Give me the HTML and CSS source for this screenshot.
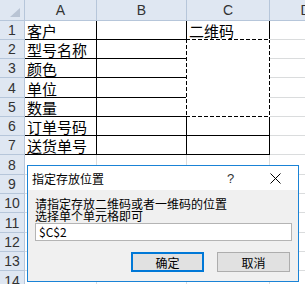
FILE: index.html
```html
<!DOCTYPE html>
<html lang="zh-CN">
<head>
    <meta charset="UTF-8">
    <meta name="viewport" content="width=device-width, initial-scale=1.0">
    <title>指定存放位置</title>
    <link rel="stylesheet" href="styles.css">
</head>
<body>
    <div class="sheet">
        <!-- header row -->
        <div class="hdr corner"><span class="tri"></span></div>
        <div class="hdr col">A</div>
        <div class="hdr col">B</div>
        <div class="hdr col">C</div>
        <div class="hdr col">D</div>

        <div class="hdr num">1</div>
        <div class="cell t">客户</div>
        <div class="cell t"></div>
        <div class="cell t nb">二维码</div>
        <div class="cell"></div>

        <div class="hdr num">2</div>
        <div class="cell t">型号名称</div>
        <div class="cell t nr"></div>
        <div class="cell merged"></div>
        <div class="cell"></div>

        <div class="hdr num">3</div>
        <div class="cell t">颜色</div>
        <div class="cell t nr"></div>
        <div class="cell"></div>

        <div class="hdr num">4</div>
        <div class="cell t">单位</div>
        <div class="cell t nr"></div>
        <div class="cell"></div>

        <div class="hdr num">5</div>
        <div class="cell t">数量</div>
        <div class="cell t nr"></div>
        <div class="cell"></div>

        <div class="hdr num">6</div>
        <div class="cell t">订单号码</div>
        <div class="cell t"></div>
        <div class="cell t"></div>
        <div class="cell"></div>

        <div class="hdr num">7</div>
        <div class="cell t">送货单号</div>
        <div class="cell t"></div>
        <div class="cell t"></div>
        <div class="cell"></div>

        <div class="hdr num">8</div>
        <div class="cell"></div><div class="cell"></div><div class="cell"></div><div class="cell"></div>
        <div class="hdr num">9</div>
        <div class="cell"></div><div class="cell"></div><div class="cell"></div><div class="cell"></div>
        <div class="hdr num">10</div>
        <div class="cell"></div><div class="cell"></div><div class="cell"></div><div class="cell"></div>
        <div class="hdr num">11</div>
        <div class="cell"></div><div class="cell"></div><div class="cell"></div><div class="cell"></div>
        <div class="hdr num">12</div>
        <div class="cell"></div><div class="cell"></div><div class="cell"></div><div class="cell"></div>
        <div class="hdr num">13</div>
        <div class="cell"></div><div class="cell"></div><div class="cell"></div><div class="cell"></div>
        <div class="hdr num">14</div>
        <div class="cell"></div><div class="cell"></div><div class="cell"></div><div class="cell"></div>
    </div>

    <!-- 对话框 -->
    <div class="dialog">
        <div class="titlebar">
            <span class="title">指定存放位置</span>
            <span class="tbtn help">?</span>
            <span class="tbtn close">
                <svg width="11" height="11" viewBox="0 0 11 11">
                    <path d="M0.5 0.5 L10.5 10.5 M10.5 0.5 L0.5 10.5" stroke="#000" stroke-width="1"/>
                </svg>
            </span>
        </div>
        <div class="dlg-body">
            <p class="prompt">请指定存放二维码或者一维码的位置<br>选择单个单元格即可</p>
            <div class="ref-input">$C$2</div>
            <div class="buttons">
                <button class="btn default">确定</button>
                <button class="btn">取消</button>
            </div>
        </div>
    </div>
</body>
</html>
```

FILE: styles.css
```css
body {
    margin: 0;
    background: #fff;
    overflow: hidden;
    font-family: "Noto Sans CJK SC", sans-serif;
}

.sheet {
    display: grid;
    grid-template-columns: 25px 72px 90px 83px 72px;
    grid-template-rows: 21px 19px 19px 19px 20px 19px 19px 19px 20px 19px 19px 20px 19px 19px 20px;
}

.hdr {
    box-sizing: border-box;
    background: #dfe7f2;
    border-right: 1px solid #b6c6da;
    border-bottom: 1px solid #b6c6da;
    color: #333;
    font-family: "Liberation Sans", Arial, sans-serif;
    font-size: 14px;
    display: flex;
    align-items: center;
    justify-content: center;
}

.corner {
    position: relative;
}

.tri {
    position: absolute;
    right: 4px;
    bottom: 3px;
    width: 0;
    height: 0;
    border-left: 10px solid transparent;
    border-bottom: 9px solid #b9c4d4;
}

.cell {
    box-sizing: border-box;
    border-right: 1px solid #dadcdd;
    border-bottom: 1px solid #dadcdd;
    font-size: 15px;
    line-height: 16px;
    color: #000;
    padding-left: 2px;
    display: flex;
    align-items: flex-end;
    white-space: nowrap;
}

/* 表格黑色边框 */
.cell.t {
    border-right-color: #000;
    border-bottom-color: #000;
}

.cell.nb {
    border-bottom-color: #fff;
}

.cell.nr {
    border-right-color: #fff;
}

.cell.merged {
    grid-row: span 4;
    position: relative;
    border-right-color: #fff;
    border-bottom-color: #fff;
}

/* 复制选区的虚线框 */
.cell.merged::after {
    content: "";
    position: absolute;
    top: -1px;
    left: -1px;
    right: -1px;
    bottom: -1px;
    background:
        repeating-linear-gradient(90deg, #000 0 4px, #fff 4px 6px) top / 100% 1px no-repeat,
        repeating-linear-gradient(90deg, #000 0 4px, #fff 4px 6px) bottom / 100% 1px no-repeat,
        repeating-linear-gradient(180deg, #000 0 4px, #fff 4px 6px) left / 1px 100% no-repeat,
        repeating-linear-gradient(180deg, #000 0 4px, #fff 4px 6px) right / 1px 100% no-repeat;
}

.dialog {
    position: absolute;
    left: 27px;
    top: 165px;
    width: 272px;
    height: 117px;
    box-sizing: border-box;
    border: 1px solid #1a83d6;
    background: #f0f0f0;
    font-size: 12px;
    color: #000;
}

.titlebar {
    height: 24px;
    background: #fff;
    display: flex;
    align-items: center;
    padding-left: 4px;
}

.title {
    flex: 1;
}

.tbtn {
    width: 45px;
    height: 24px;
    display: flex;
    align-items: center;
    justify-content: center;
}

.help {
    font-family: "Liberation Sans", Arial, sans-serif;
    font-size: 13px;
    color: #333;
}

.dlg-body {
    padding: 8px 6px 0 7px;
}

.prompt {
    margin: 0;
    line-height: 12px;
}

.ref-input {
    margin-top: 1px;
    height: 18px;
    box-sizing: border-box;
    border: 1px solid #b4b4b4;
    background: #fff;
    padding-left: 3px;
    line-height: 16px;
}

.buttons {
    display: flex;
    justify-content: flex-end;
    gap: 13px;
    margin-top: 11px;
    padding-right: 2px;
}

.btn {
    width: 73px;
    height: 20px;
    box-sizing: border-box;
    border: 1px solid #adadad;
    background: #e1e1e1;
    font-family: "Noto Sans CJK SC", sans-serif;
    font-size: 12px;
    padding: 0;
    color: #000;
}

.btn.default {
    border: 2px solid #0078d7;
}
```
